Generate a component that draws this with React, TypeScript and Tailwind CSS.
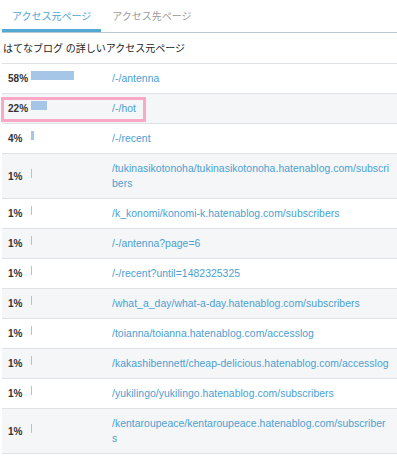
import React from "react";

type Row = { pct: number; url: string[] };

const rows: Row[] = [
  { pct: 58, url: ["/-/antenna"] },
  { pct: 22, url: ["/-/hot"] },
  { pct: 4, url: ["/-/recent"] },
  { pct: 1, url: ["/tukinasikotonoha/tukinasikotonoha.hatenablog.com/subscri", "bers"] },
  { pct: 1, url: ["/k_konomi/konomi-k.hatenablog.com/subscribers"] },
  { pct: 1, url: ["/-/antenna?page=6"] },
  { pct: 1, url: ["/-/recent?until=1482325325"] },
  { pct: 1, url: ["/what_a_day/what-a-day.hatenablog.com/subscribers"] },
  { pct: 1, url: ["/toianna/toianna.hatenablog.com/accesslog"] },
  { pct: 1, url: ["/kakashibennett/cheap-delicious.hatenablog.com/accesslog"] },
  { pct: 1, url: ["/yukilingo/yukilingo.hatenablog.com/subscribers"] },
  { pct: 1, url: ["/kentaroupeace/kentaroupeace.hatenablog.com/subscriber", "s"] },
];

const FONT = { fontFamily: '"Liberation Sans", "Noto Sans CJK JP", sans-serif' };

export default function App() {
  return (
    <div className="w-[397px] h-[459px] bg-white overflow-hidden" style={FONT}>
      <div className="ml-[2px]">
        <div className="flex border-b border-[#bac7d0]">
          <div className="pt-[9px] pb-[5px] px-[10px] leading-[15px] text-[10px] text-[#4fa6d3] border-b-[3px] border-[#52a9d4]">
            アクセス元ページ
          </div>
          <div className="ml-[1px] pt-[9px] pb-[5px] px-[10px] leading-[15px] text-[10px] text-[#9a9a9a] border-b-[3px] border-transparent">
            アクセス先ページ
          </div>
        </div>
        <div className="pt-[8px] pb-[7px] pl-[1px] leading-[15px] text-[10px] text-[#222]">
          はてなブログ の詳しいアクセス元ページ
        </div>
        <div className="border-b border-[#dfe2e5]">
          {rows.map((r, i) => (
            <div
              key={i}
              className={
                "relative flex items-center border-t border-[#dfe2e5] " +
                (i % 2 === 1 ? "bg-[#f5f6f8]" : "bg-white")
              }
            >
              <div className="w-[29px] pl-[6px] shrink-0 text-[10px] font-bold text-[#333] leading-[15px]">
                {r.pct}%
              </div>
              <div className="w-[81px] shrink-0 flex items-center">
                <div
                  className="h-[9px] mb-[6px] bg-[#a5c6e6]"
                  style={{ width: `${Math.max(1, Math.round(r.pct * 0.74))}px` }}
                />
              </div>
              <div className="flex-1 min-w-0 py-[7px] pr-[2px] text-[10.4px] tracking-[0.05px] leading-[15px] text-[#4aa0d2] whitespace-nowrap overflow-hidden">
                {r.url.map((part, j) => (
                  <div key={j}>{part}</div>
                ))}
              </div>
              {i === 1 && (
                <div className="absolute left-[-1px] top-[3px] w-[145px] h-[25px] border-[3px] border-[#fba8c8]" />
              )}
            </div>
          ))}
        </div>
      </div>
    </div>
  );
}
